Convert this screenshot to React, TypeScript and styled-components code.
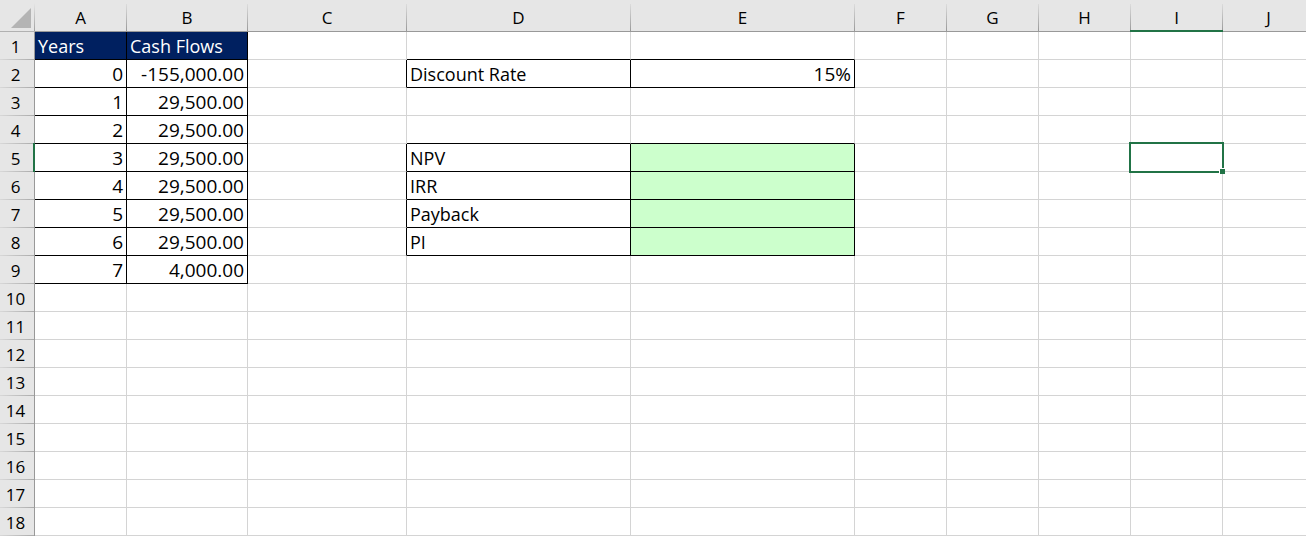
import React from 'react';
import styled, { createGlobalStyle, css } from 'styled-components';

const GlobalStyle = createGlobalStyle`
  * { box-sizing: border-box; }
  body {
    margin: 0;
    background: #fff;
    color: #000;
    font-family: 'Open Sans', 'Noto Sans', sans-serif;
  }
`;

const GRID = '#d4d4d4';
const ACCENT = '#217346';

const Viewport = styled.main`
  width: 100%;
  overflow-x: auto;
  scrollbar-width: none;
`;

const Sheet = styled.table`
  table-layout: fixed;
  width: 0;
  border-collapse: separate;
  border-spacing: 0;
  font-size: 18px;
  line-height: 24px;
`;

const Column = styled.col<{ $width: number }>`
  width: ${p => p.$width}px;
`;

const HeaderRow = styled.tr`
  height: 32px;
`;

const Row = styled.tr`
  height: 28px;
`;

const Corner = styled.td`
  padding: 0;
  border-bottom: 1px solid #b1b1b1;
  background: linear-gradient(#e6e6e6, #a0a0a0) right bottom / 1px 28px no-repeat, #e6e6e6;
`;

const SelectAll = styled.button`
  display: flex;
  align-items: flex-end;
  justify-content: flex-end;
  width: 100%;
  height: 31px;
  padding: 0 4px 3px 0;
  border: 0;
  background: none;
`;

const ColumnHeader = styled.th<{ $active: boolean }>`
  position: relative;
  padding: 4px 1px 0 0;
  border-bottom: 1px solid #999;
  background: linear-gradient(#dcdcdc, #999) right bottom / 1px 27px no-repeat, #e6e6e6;
  font-size: 17px;
  font-weight: 400;
  text-align: center;
  ${p => p.$active && css`
    &::after {
      content: '';
      position: absolute;
      inset: auto 0 -1px -1px;
      height: 2px;
      background: ${ACCENT};
    }
  `}
`;

const RowHeader = styled.th<{ $active: boolean }>`
  position: relative;
  padding: 2px 3px 0 0;
  border-right: 1px solid #999;
  background: linear-gradient(to right, #d8d8d8, #ababab) left bottom / 100% 1px no-repeat, #e6e6e6;
  font-size: 17px;
  font-weight: 400;
  text-align: center;
  ${p => p.$active && css`
    &::after {
      content: '';
      position: absolute;
      inset: -1px -1px 0 auto;
      width: 2px;
      background: ${ACCENT};
    }
  `}
`;

type Fill = 'none' | 'navy' | 'green';
const fills: Record<Fill, string> = { none: '#fff', navy: '#002060', green: '#ccffcc' };

const Cell = styled.td<{ $fill: Fill; $right: boolean; $bottom: boolean; $numeric: boolean }>`
  position: relative;
  padding: 2px 3px 1px;
  border: 0 solid;
  border-width: 0 1px 1px 0;
  border-right-color: ${p => (p.$right ? '#000' : GRID)};
  border-bottom-color: ${p => (p.$bottom ? '#000' : GRID)};
  background: ${p => fills[p.$fill]};
  color: ${p => (p.$fill === 'navy' ? '#fff' : '#000')};
  font-size: ${p => (p.$numeric ? 19 : 18)}px;
  text-align: ${p => (p.$numeric ? 'right' : 'left')};
  white-space: nowrap;
`;

const Selection = styled.div`
  position: absolute;
  z-index: 1;
  inset: -2px;
  border: 2px solid ${ACCENT};
`;

const FillHandle = styled.span`
  position: absolute;
  right: -3px;
  bottom: -3px;
  width: 6px;
  height: 6px;
  border: 0 solid #fff;
  border-width: 1px 0 0 1px;
  background: ${ACCENT};
`;

const columns = [
  { name: 'A', width: 92 },
  { name: 'B', width: 121 },
  { name: 'C', width: 159 },
  { name: 'D', width: 224 },
  { name: 'E', width: 224 },
  { name: 'F', width: 92 },
  { name: 'G', width: 92 },
  { name: 'H', width: 92 },
  { name: 'I', width: 92 },
  { name: 'J', width: 92 },
];
const rows = Array.from({ length: 18 }, (_, i) => i + 1);
const selected = { column: 'I', row: 5 };

const flows = ['-155,000.00', '29,500.00', '29,500.00', '29,500.00', '29,500.00', '29,500.00', '29,500.00', '4,000.00'];
const values: Record<string, string> = {
  A1: 'Years',
  B1: 'Cash Flows',
  D2: 'Discount Rate',
  E2: '15%',
  D5: 'NPV',
  D6: 'IRR',
  D7: 'Payback',
  D8: 'PI',
};
flows.forEach((flow, year) => {
  values[`A${year + 2}`] = String(year);
  values[`B${year + 2}`] = flow;
});

// Whether a cell belongs to one of the ranges with "all borders" applied.
const boxed = (c: number, r: number) =>
  (c <= 1 && r <= 9) || ((c === 3 || c === 4) && (r === 2 || (r >= 5 && r <= 8)));

const fillOf = (c: number, r: number): Fill => {
  if (c <= 1 && r === 1) return 'navy';
  if (c === 4 && r >= 5 && r <= 8) return 'green';
  return 'none';
};

export default function App() {
  return (
    <>
      <GlobalStyle />
      <Viewport>
        <Sheet>
          <colgroup>
            <Column $width={35} />
            {columns.map(c => <Column key={c.name} $width={c.width} />)}
          </colgroup>
          <thead>
            <HeaderRow>
              <Corner>
                <SelectAll type="button" aria-label="Select all">
                  <svg width="20" height="20" viewBox="0 0 20 20" aria-hidden="true">
                    <path d="M20 0V20H0Z" fill="#b4b4b4" />
                  </svg>
                </SelectAll>
              </Corner>
              {columns.map(c => (
                <ColumnHeader key={c.name} scope="col" $active={c.name === selected.column}>
                  {c.name}
                </ColumnHeader>
              ))}
            </HeaderRow>
          </thead>
          <tbody>
            {rows.map(r => (
              <Row key={r}>
                <RowHeader scope="row" $active={r === selected.row}>{r}</RowHeader>
                {columns.map((c, i) => {
                  const value = values[c.name + r] ?? '';
                  return (
                    <Cell
                      key={c.name}
                      $fill={fillOf(i, r)}
                      $right={boxed(i, r) || boxed(i + 1, r)}
                      $bottom={boxed(i, r) || boxed(i, r + 1)}
                      $numeric={/^-?\d/.test(value)}
                    >
                      {value}
                      {c.name === selected.column && r === selected.row && (
                        <Selection>
                          <FillHandle />
                        </Selection>
                      )}
                    </Cell>
                  );
                })}
              </Row>
            ))}
          </tbody>
        </Sheet>
      </Viewport>
    </>
  );
}
